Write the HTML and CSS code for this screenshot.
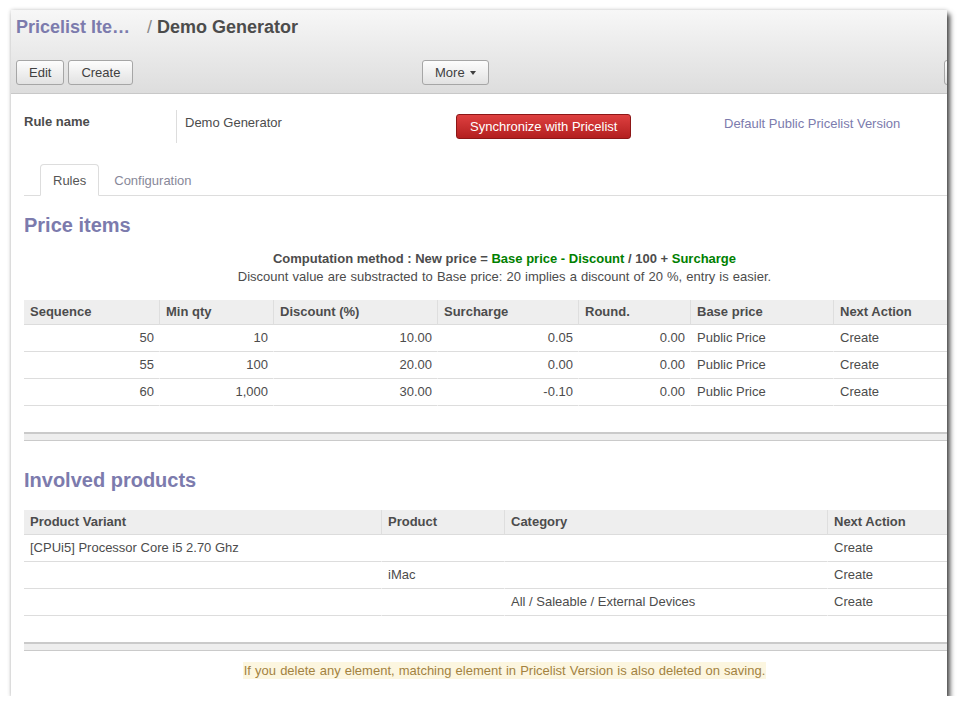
FILE: index.html
```html
<!DOCTYPE html>
<html lang="en">
<head>
<meta charset="utf-8">
<title>Demo Generator</title>
<link rel="stylesheet" href="styles.css">
</head>
<body>
<div class="page">
  <div class="window">
    <header class="topbar">
      <div class="crumbs"><a class="crumb-link">Pricelist Ite…</a><span class="crumb-sep">/</span> <span class="crumb-current">Demo Generator</span></div>
      <div class="toolbar">
        <div class="tb-group"><button class="btn">Edit</button><button class="btn">Create</button></div>
        <div class="tb-group"><button class="btn">More<span class="caret"></span></button></div>
        <div class="tb-group"><button class="btn btn-pager" aria-label="Previous"><span class="chev"></span></button></div>
      </div>
    </header>
    <main class="sheet">
      <div class="rule-row">
        <div class="field-label">Rule name</div>
        <div class="field-value">Demo Generator</div>
        <div class="field-action"><button class="btn-red">Synchronize with Pricelist</button></div>
        <div class="field-link">Default Public Pricelist Version</div>
      </div>
      <ul class="tabs">
        <li class="tab active">Rules</li>
        <li class="tab">Configuration</li>
      </ul>
      <h2 class="section-title first">Price items</h2>
      <p class="formula">Computation method : New price = <span class="green">Base price - Discount</span> / 100 + <span class="green">Surcharge</span></p>
      <p class="hint">Discount value are substracted to Base price: 20 implies a discount of 20 %, entry is easier.</p>
      <table class="grid grid-items">
        <thead>
          <tr>
            <th class="w135">Sequence</th>
            <th class="w114">Min qty</th>
            <th class="w164">Discount (%)</th>
            <th class="w141">Surcharge</th>
            <th class="w112">Round.</th>
            <th class="w143">Base price</th>
            <th class="w152">Next Action</th>
          </tr>
        </thead>
        <tbody>
          <tr><td class="num">50</td><td class="num">10</td><td class="num">10.00</td><td class="num">0.05</td><td class="num">0.00</td><td>Public Price</td><td>Create</td></tr>
          <tr><td class="num">55</td><td class="num">100</td><td class="num">20.00</td><td class="num">0.00</td><td class="num">0.00</td><td>Public Price</td><td>Create</td></tr>
          <tr><td class="num">60</td><td class="num">1,000</td><td class="num">30.00</td><td class="num">-0.10</td><td class="num">0.00</td><td>Public Price</td><td>Create</td></tr>
          <tr class="filler"><td>&nbsp;</td><td></td><td></td><td></td><td></td><td></td><td></td></tr>
        </tbody>
        <tfoot>
          <tr><td colspan="7"></td></tr>
        </tfoot>
      </table>
      <h2 class="section-title second">Involved products</h2>
      <table class="grid grid-products">
        <thead>
          <tr>
            <th class="w357">Product Variant</th>
            <th class="w123">Product</th>
            <th class="w323">Category</th>
            <th class="w158">Next Action</th>
          </tr>
        </thead>
        <tbody>
          <tr><td>[CPUi5] Processor Core i5 2.70 Ghz</td><td></td><td></td><td>Create</td></tr>
          <tr><td></td><td>iMac</td><td></td><td>Create</td></tr>
          <tr><td></td><td></td><td>All / Saleable / External Devices</td><td>Create</td></tr>
          <tr class="filler"><td>&nbsp;</td><td></td><td></td><td></td></tr>
        </tbody>
        <tfoot>
          <tr><td colspan="4"></td></tr>
        </tfoot>
      </table>
      <p class="notice"><span class="notice-text">If you delete any element, matching element in Pricelist Version is also deleted on saving.</span></p>
    </main>
  </div>
</div>
</body>
</html>
```

FILE: styles.css
```css
html, body {
  margin: 0;
  padding: 0;
  background: #ffffff;
}

.page {
  padding: 10px 0 0 11px;
}

.window {
  width: 936px;
  height: 686px;
  overflow: hidden;
  background: #ffffff;
  box-shadow: 3px 4px 5px rgba(0, 0, 0, 0.7), 0 0 4px rgba(0, 0, 0, 0.2);
  font-family: "Liberation Sans", Arial, sans-serif;
  font-size: 13px;
  color: #4c4c4c;
}

/* ---------- top bar ---------- */
.topbar {
  padding: 6px 0 8px 5px;
  background: linear-gradient(#f7f7f7, #dddddd);
  border-bottom: 1px solid #c8c8c8;
}

.crumbs {
  font-size: 18px;
  font-weight: bold;
  line-height: 22px;
  white-space: nowrap;
}

.crumb-link {
  color: #7c7bad;
  margin-right: 17px;
}

.crumb-sep {
  color: #8a8a8a;
  font-weight: normal;
}

.crumb-current {
  color: #4c4c4c;
}

.toolbar {
  margin-top: 22px;
  display: grid;
  grid-template-columns: 406px 522px 60px;
  width: 988px;
}

.tb-group {
  display: flex;
  gap: 4px;
}

.btn {
  height: 25px;
  padding: 0 12px;
  border: 1px solid #a6a6a6;
  border-radius: 3px;
  background: linear-gradient(#fdfdfd, #e2e2e2);
  font-family: inherit;
  font-size: 13px;
  line-height: 23px;
  color: #404040;
  box-sizing: border-box;
}

.btn-pager {
  width: 30px;
  padding: 0 11px;
}

.chev {
  display: block;
  width: 5px;
  height: 5px;
  border-left: 2px solid #404040;
  border-bottom: 2px solid #404040;
  transform: rotate(45deg);
}

.caret {
  display: inline-block;
  width: 0;
  height: 0;
  margin-left: 5px;
  vertical-align: 2px;
  border-left: 3px solid transparent;
  border-right: 3px solid transparent;
  border-top: 4px solid #404040;
}

/* ---------- sheet ---------- */
.sheet {
  width: 961px;
  padding: 17px 0 0 13px;
}

.rule-row {
  display: grid;
  grid-template-columns: 152px 280px 268px auto;
  align-items: start;
}

.field-label {
  padding-top: 2px;
  line-height: 18px;
  font-weight: bold;
}

.field-value {
  height: 33px;
  box-sizing: border-box;
  padding: 4px 0 0 8px;
  line-height: 18px;
  border-left: 1px solid #dddddd;
  margin-top: -1px;
}

.field-action {
  padding-top: 3px;
}

.btn-red {
  height: 25px;
  padding: 0 13px;
  border: 1px solid #8d1717;
  border-radius: 3px;
  background: linear-gradient(#de4040, #b31f1f);
  color: #ffffff;
  font-family: inherit;
  font-size: 13px;
  line-height: 23px;
  box-sizing: border-box;
}

.field-link {
  padding-top: 4px;
  line-height: 18px;
  color: #7c7bad;
}

/* ---------- tabs ---------- */
.tabs {
  list-style: none;
  margin: 21px 0 0;
  padding: 0 0 0 16px;
  display: flex;
  border-bottom: 1px solid #dddddd;
}

.tab {
  padding: 7px 12px 5px;
  line-height: 18px;
  margin-right: 2px;
  margin-bottom: -1px;
  border: 1px solid transparent;
  border-radius: 4px 4px 0 0;
  color: #888899;
}

.tab.active {
  border-color: #dddddd #dddddd transparent;
  background: #ffffff;
  color: #555555;
}

/* ---------- headings / text ---------- */
.section-title {
  font-size: 20px;
  line-height: 24px;
  font-weight: bold;
  color: #7c7bad;
}

.section-title.first {
  margin: 17px 0 0;
}

.section-title.second {
  margin: 27px 0 0;
}

.formula {
  margin: 13px 0 0;
  line-height: 18px;
  text-align: center;
  font-weight: bold;
}

.green {
  color: #008000;
}

.hint {
  margin: 0;
  line-height: 18px;
  text-align: center;
  word-spacing: 0.5px;
}

/* ---------- tables ---------- */
.grid {
  width: 961px;
  table-layout: fixed;
  border-collapse: separate;
  border-spacing: 0;
  font-size: 13px;
  color: #4c4c4c;
}

.grid-items {
  margin-top: 14px;
}

.grid-products {
  margin-top: 18px;
}

.grid th {
  box-sizing: border-box;
  background: #eeeeee;
  font-weight: bold;
  text-align: left;
  padding: 3px 5px 3px 6px;
  line-height: 18px;
  border-bottom: 1px solid #dcdcdc;
  border-left: 1px solid #dedede;
  white-space: nowrap;
}

.grid th:first-child {
  border-left: none;
}

.grid td {
  padding: 4px 5px 4px 6px;
  line-height: 18px;
  border-bottom: 1px solid #dddddd;
  border-left: 1px solid transparent;
  white-space: nowrap;
}

.grid td:first-child {
  border-left: none;
}

.grid td.num {
  text-align: right;
}

.grid tr.filler td {
  border-bottom: none;
}

.grid tfoot td {
  height: 6px;
  padding: 0;
  line-height: 0;
  background: #eeeeee;
  border-top: 2px solid #cacaca;
  border-bottom: 1px solid #cacaca;
}

.w135 { width: 135px; }
.w114 { width: 114px; }
.w164 { width: 164px; }
.w141 { width: 141px; }
.w112 { width: 112px; }
.w143 { width: 143px; }
.w152 { width: 152px; }
.w357 { width: 357px; }
.w123 { width: 123px; }
.w323 { width: 323px; }
.w158 { width: 158px; }

/* ---------- notice ---------- */
.notice {
  margin: 11px 0 0;
  text-align: center;
}

.notice-text {
  display: inline-block;
  padding: 0 1px;
  line-height: 17px;
  word-spacing: 0.5px;
  background: #fcf6e0;
  color: #a3823f;
}
```
